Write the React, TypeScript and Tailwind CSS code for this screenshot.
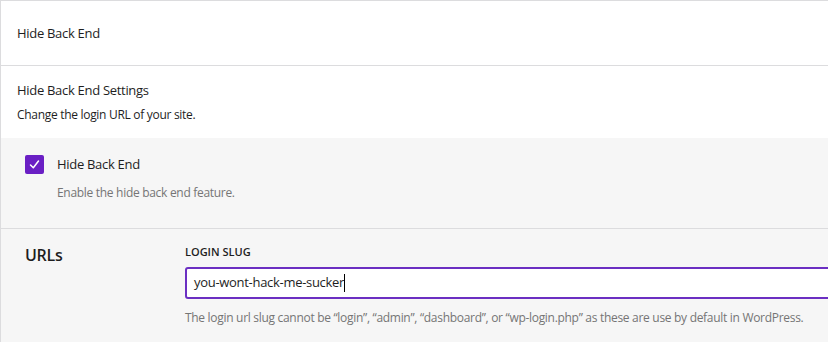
import React from "react";

export default function App() {
  return (
    <div className="w-[828px] h-[342px] overflow-hidden bg-white text-[#1e1e1e] tracking-[-0.3px]" style={{ fontFamily: '"Open Sans", "Noto Sans", sans-serif' }}>
      <div className="w-[900px] border-l border-t border-[#dcdcde]">
        <div className="h-[65px] flex items-center px-[16px] pt-[2px] text-[13px] border-b border-[#dcdcde]">
          Hide Back End
        </div>
        <div className="px-[16px] pt-[15px] pb-[15px]">
          <div className="text-[13px] leading-[18px]">Hide Back End Settings</div>
          <div className="text-[12px] leading-[16px] mt-[8px]">Change the login URL of your site.</div>
        </div>
        <div className="bg-[#f6f6f6] border-b border-[#dcdcde] px-[24px] pt-[17px] pb-[26px]">
          <div className="flex items-center gap-[13px]">
            <div className="w-[19px] h-[19px] rounded-[2px] bg-[#6a1fc4] flex items-center justify-center">
              <svg width="13" height="13" viewBox="0 0 13 13" fill="none">
                <path d="M2.5 7 L5.3 9.8 L10.5 3" stroke="white" strokeWidth="1.5" strokeLinecap="round" strokeLinejoin="round" />
              </svg>
            </div>
            <span className="text-[13px]">Hide Back End</span>
          </div>
          <div className="ml-[32px] mt-[9px] text-[12px] text-[#757575]">Enable the hide back end feature.</div>
        </div>
        <div className="bg-[#f6f6f6] flex px-[24px] pt-[14px] pb-[30px]">
          <div className="w-[160px] text-[16px] font-semibold">URLs</div>
          <div className="flex-1">
            <div className="text-[11px] font-semibold uppercase leading-[16px] mt-[1px] tracking-[0px]">Login Slug</div>
            <div className="mt-[7px] h-[32px] bg-white border-2 border-[#6b2fc2] rounded-[3px] flex items-center px-[7px] text-[13px]">
              you-wont-hack-me-sucker<span className="w-px h-[18px] bg-black" />
            </div>
            <div className="mt-[10px] text-[12px] text-[#757575]">
              The login url slug cannot be “login”, “admin”, “dashboard”, or “wp-login.php” as these are use by default in WordPress.
            </div>
          </div>
        </div>
      </div>
    </div>
  );
}
